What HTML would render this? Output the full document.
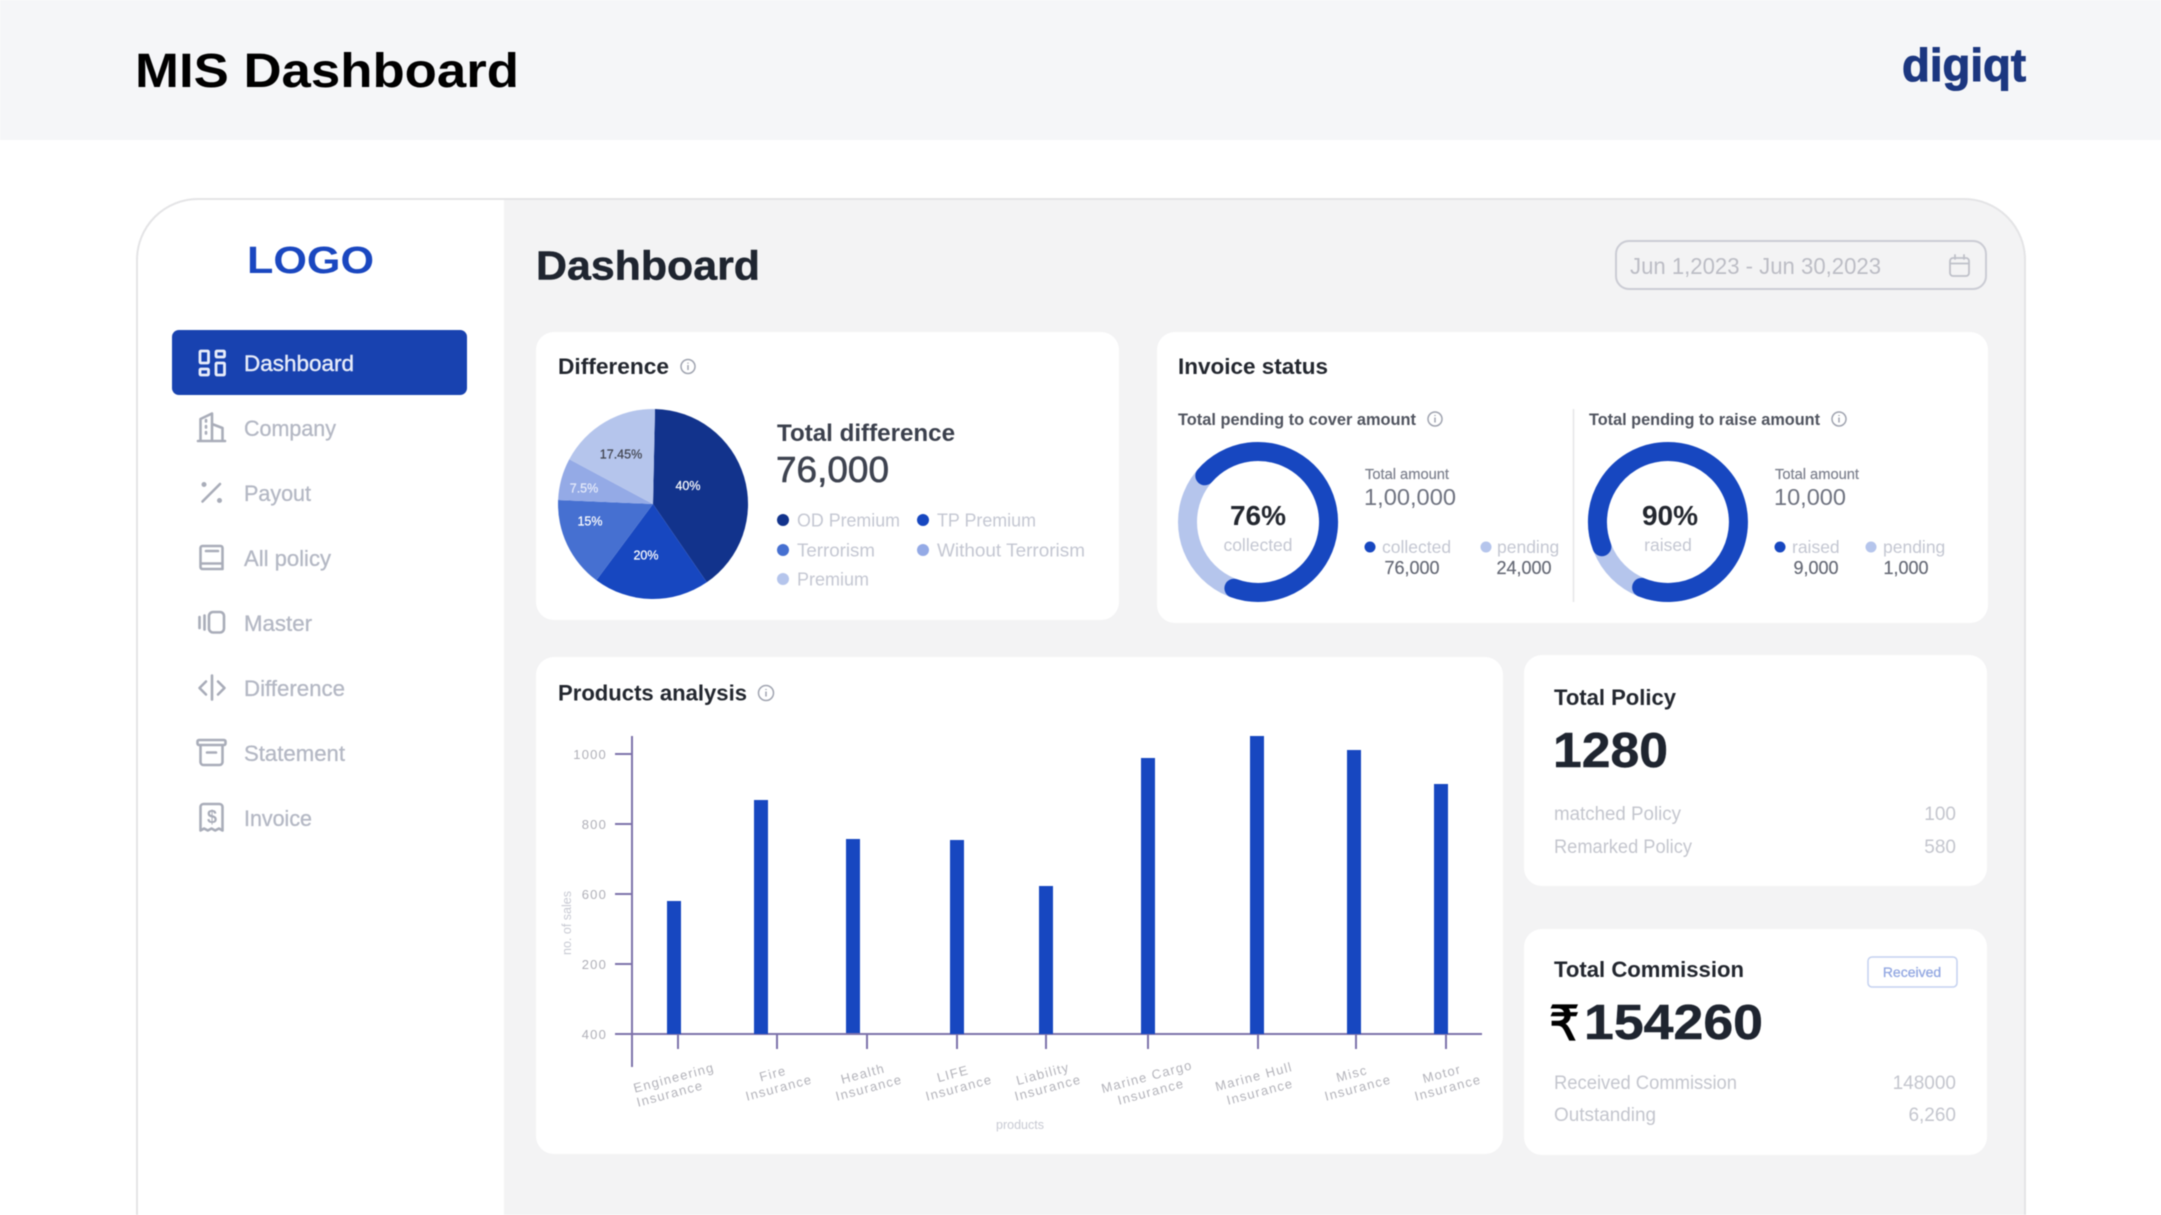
<!DOCTYPE html>
<html lang="en">
<head>
<meta charset="utf-8">
<title>MIS Dashboard</title>
<style>
html,body{margin:0;padding:0;background:#fff;width:2161px;height:1215px;overflow:hidden}
svg{display:block;filter:blur(.45px)}
text{font-family:"Liberation Sans","DejaVu Sans",sans-serif}
.b{font-weight:700}
.m{stroke:currentColor;stroke-width:.35px}
.nav{font-size:22px;fill:#b4b8c4;stroke:#b4b8c4;stroke-width:.3px}
.ic{fill:none;stroke:#a9adb9;stroke-width:2.6;stroke-linecap:round;stroke-linejoin:round}
.h{font-size:22px;font-weight:700;fill:#23272f}
.leg{font-size:18.5px;fill:#c4c7d2}
.pl{font-size:12.5px;fill:#fff;text-anchor:middle;stroke:currentColor;stroke-width:.2px}
.sh{font-size:16.5px;font-weight:700;fill:#50545f}
.ta{font-size:14.5px;fill:#7d818e;stroke:#7d818e;stroke-width:.2px}
.tv{font-size:23.5px;fill:#6f7380}
.sm{font-size:17.5px;fill:#c4c7d2}
.val{font-size:18px;fill:#666a76;text-anchor:middle;stroke:#666a76;stroke-width:.2px}
.row{font-size:19px;fill:#c4c6ce}
.ra{text-anchor:end}
.yt{font-size:13px;fill:#b0b0b8;text-anchor:end;letter-spacing:1.2px}
.xt{font-size:13px;fill:#b3b3ba;text-anchor:middle;letter-spacing:1.25px}
.ax{stroke:#7d72ab;stroke-width:2;fill:none}
.bar{fill:#1747c0}
.inf{fill:none;stroke:#a0a4b0;stroke-width:1.5}
.cap{font-size:12.5px;fill:#c8cad3}
</style>
</head>
<body>
<svg width="2161" height="1215" viewBox="0 0 2161 1215" xmlns="http://www.w3.org/2000/svg">

<!-- header -->
<rect width="2161" height="140" fill="#f5f6f8"/>
<text x="135" y="87" font-size="48" class="b" fill="#000" textLength="384" lengthAdjust="spacingAndGlyphs">MIS Dashboard</text>
<text x="1902" y="81" font-size="46" class="b" fill="#1c3780" stroke="#1c3780" stroke-width="1" textLength="124" lengthAdjust="spacingAndGlyphs">digiqt</text>

<!-- frame -->
<path d="M137 1215V260a61 61 0 0 1 61-61H1964a61 61 0 0 1 61 61V1215Z" fill="#fff"/>
<path d="M504 199H1964a61 61 0 0 1 61 61V1215H504Z" fill="#f3f3f4"/>
<path d="M137 1215V260a61 61 0 0 1 61-61H1964a61 61 0 0 1 61 61V1215" fill="none" stroke="#e4e4e6" stroke-width="2"/>

<!-- sidebar -->
<text x="247" y="273" font-size="38" class="b" fill="#1a47c0" textLength="127" lengthAdjust="spacingAndGlyphs">LOGO</text>
<rect x="172" y="330" width="295" height="65" rx="7" fill="#1842b0"/>
<g fill="none" stroke="#e8edfa" stroke-width="2.800">
<rect x="200" y="351" width="8.500" height="12" rx="1"/>
<rect x="216" y="351" width="8.500" height="6" rx="1"/>
<rect x="200" y="369" width="8.500" height="6" rx="1"/>
<rect x="216" y="363" width="8.500" height="12" rx="1"/>
</g>
<text x="244" y="371" font-size="22" fill="#e6ebf9" stroke="#e6ebf9" stroke-width=".4" textLength="110" lengthAdjust="spacingAndGlyphs">Dashboard</text>

<path class="ic" d="M198 441h27M200.500 441V419l11.500-5.500V441M212 424l10.500 4V441M206 420v1.500M206 426v1.500M206 432v1.500"/>
<text x="244" y="436" class="nav" textLength="92" lengthAdjust="spacingAndGlyphs">Company</text>

<path class="ic" d="M220 484L202.500 501.500"/>
<circle cx="204" cy="484.500" r="2.500" fill="#a9adb9"/><circle cx="219.500" cy="500.500" r="2.500" fill="#a9adb9"/>
<text x="244" y="501" class="nav" textLength="67" lengthAdjust="spacingAndGlyphs">Payout</text>

<path class="ic" d="M202.500 546h18a2 2 0 0 1 2 2v21h-20a2 2 0 0 1-2-2v-19a2 2 0 0 1 2-2zM200.500 563.500h22M206 551h12"/>
<text x="244" y="566" class="nav" textLength="87" lengthAdjust="spacingAndGlyphs">All policy</text>

<rect class="ic" x="209" y="612" width="15" height="20.500" rx="4"/>
<path class="ic" d="M199.500 617v11M204.500 615.500v14"/>
<text x="244" y="631" class="nav" textLength="68" lengthAdjust="spacingAndGlyphs">Master</text>

<path class="ic" d="M212 675.500v24M206 681.500l-6.500 6.500 6.500 6.500M218 681.500l6.500 6.500-6.500 6.500"/>
<text x="244" y="696" class="nav" textLength="101" lengthAdjust="spacingAndGlyphs">Difference</text>

<path class="ic" d="M199 740h25a1.500 1.500 0 0 1 1.500 1.500v2a1.500 1.500 0 0 1-1.500 1.500h-25a1.500 1.500 0 0 1-1.500-1.500v-2a1.500 1.500 0 0 1 1.500-1.500zM200.500 745v17a3 3 0 0 0 3 3h16a3 3 0 0 0 3-3v-17M207 752.500h9"/>
<text x="244" y="761" class="nav" textLength="101" lengthAdjust="spacingAndGlyphs">Statement</text>

<path class="ic" d="M200.500 830.500V807a3 3 0 0 1 3-3h16a3 3 0 0 1 3 3v23.500l-3.600-2-3.700 2-3.700-2-3.700 2-3.700-2z"/>
<text x="212" y="823" font-size="18" class="b" fill="#a9adb9" text-anchor="middle">$</text>
<text x="244" y="826" class="nav" textLength="68" lengthAdjust="spacingAndGlyphs">Invoice</text>

<!-- main header -->
<text x="536" y="279.500" font-size="40.500" class="b" fill="#1f2530" stroke="#1f2530" stroke-width=".5" textLength="224" lengthAdjust="spacingAndGlyphs">Dashboard</text>
<rect x="1616" y="241" width="370" height="48" rx="13" fill="#f3f3f4" stroke="#cbccd4" stroke-width="2"/>
<text x="1630" y="274" font-size="23" fill="#bcbdc5" textLength="251" lengthAdjust="spacingAndGlyphs">Jun 1,2023 - Jun 30,2023</text>
<g fill="none" stroke="#bfc1c9" stroke-width="1.800" stroke-linecap="round"><rect x="1950" y="258" width="19" height="18" rx="3"/><path d="M1950 263.500h19M1955 255v4M1964 255v4"/></g>

<!-- Difference card -->
<rect x="536" y="332" width="583" height="288" rx="18" fill="#fff"/>
<text x="558" y="374" class="h" textLength="111" lengthAdjust="spacingAndGlyphs">Difference</text>
<circle class="inf" cx="688" cy="366.500" r="7"/><path d="M688 365v5M688 362.600v1" stroke="#a0a4b0" stroke-width="1.500"/>
<path d="M653 504L655 409A95 95 0 0 1 706.800 582.300Z" fill="#12338c"/>
<path d="M653 504L706.800 582.300A95 95 0 0 1 596.400 580.300Z" fill="#1747c0"/>
<path d="M653 504L596.400 580.300A95 95 0 0 1 558.100 500Z" fill="#4670d1"/>
<path d="M653 504L558.100 500A95 95 0 0 1 569.300 459.200Z" fill="#94aae6"/>
<path d="M653 504L569.300 459.200A95 95 0 0 1 655 409Z" fill="#b5c5ec"/>
<text x="688" y="490" class="pl" style="color:#fff">40%</text>
<text x="646" y="559.500" class="pl" style="color:#fff">20%</text>
<text x="590" y="525.500" class="pl" style="color:#fff">15%</text>
<text x="584" y="492.500" class="pl" style="fill:#e6ebfa;color:#e6ebfa">7.5%</text>
<text x="621" y="458.500" class="pl" style="fill:#41444f;color:#41444f">17.45%</text>
<text x="777" y="441" font-size="24" class="b" fill="#3b404d" textLength="178" lengthAdjust="spacingAndGlyphs">Total difference</text>
<text x="776" y="482" font-size="36" fill="#3e4350" stroke="#3e4350" stroke-width=".6" textLength="113" lengthAdjust="spacingAndGlyphs">76,000</text>
<circle cx="783" cy="520" r="6" fill="#12338c"/><text x="797" y="526.500" class="leg" textLength="103" lengthAdjust="spacingAndGlyphs">OD Premium</text>
<circle cx="923" cy="520" r="6" fill="#1747c0"/><text x="937" y="526.500" class="leg" textLength="99" lengthAdjust="spacingAndGlyphs">TP Premium</text>
<circle cx="783" cy="550" r="6" fill="#4670d1"/><text x="797" y="556.500" class="leg" textLength="78" lengthAdjust="spacingAndGlyphs">Terrorism</text>
<circle cx="923" cy="550" r="6" fill="#94aae6"/><text x="937" y="556.500" class="leg" textLength="148" lengthAdjust="spacingAndGlyphs">Without Terrorism</text>
<circle cx="783" cy="579" r="6" fill="#b5c5ec"/><text x="797" y="585.500" class="leg" textLength="72" lengthAdjust="spacingAndGlyphs">Premium</text>

<!-- Invoice card -->
<rect x="1157" y="332" width="831" height="291" rx="18" fill="#fff"/>
<text x="1178" y="374" class="h" textLength="150" lengthAdjust="spacingAndGlyphs">Invoice status</text>
<text x="1178" y="425" class="sh" textLength="238" lengthAdjust="spacingAndGlyphs">Total pending to cover amount</text>
<circle class="inf" cx="1435" cy="419" r="7"/><path d="M1435 417.500v5M1435 415v1" stroke="#a0a4b0" stroke-width="1.500"/>
<text x="1589" y="425" class="sh" textLength="231" lengthAdjust="spacingAndGlyphs">Total pending to raise amount</text>
<circle class="inf" cx="1839" cy="419" r="7"/><path d="M1839 417.500v5M1839 415v1" stroke="#a0a4b0" stroke-width="1.500"/>
<path d="M1573.500 409V602" stroke="#e6e6e8" stroke-width="1.500"/>

<circle cx="1258" cy="522" r="70.500" fill="none" stroke="#b5c5ec" stroke-width="19"/>
<path d="M1204.800 475.800A70.500 70.500 0 1 1 1233.900 588.200" fill="none" stroke="#1747c0" stroke-width="19" stroke-linecap="round"/>
<text x="1258" y="525" font-size="28" class="b" fill="#23272f" text-anchor="middle">76%</text>
<text x="1258" y="551" class="sm" text-anchor="middle">collected</text>
<text x="1365" y="479" class="ta" textLength="84" lengthAdjust="spacingAndGlyphs">Total amount</text>
<text x="1364" y="505" class="tv" textLength="92" lengthAdjust="spacingAndGlyphs">1,00,000</text>
<circle cx="1370" cy="547" r="5.500" fill="#1747c0"/><text x="1382" y="553" class="sm">collected</text>
<text x="1412" y="574" class="val">76,000</text>
<circle cx="1486" cy="547" r="5.500" fill="#b5c5ec"/><text x="1497" y="553" class="sm">pending</text>
<text x="1524" y="574" class="val">24,000</text>

<circle cx="1668" cy="522" r="70.500" fill="none" stroke="#b5c5ec" stroke-width="19"/>
<path d="M1601.900 546.700A70.500 70.500 0 1 1 1641.600 587.400" fill="none" stroke="#1747c0" stroke-width="19" stroke-linecap="round"/>
<text x="1670" y="525" font-size="28" class="b" fill="#23272f" text-anchor="middle">90%</text>
<text x="1668" y="551" class="sm" text-anchor="middle">raised</text>
<text x="1775" y="479" class="ta" textLength="84" lengthAdjust="spacingAndGlyphs">Total amount</text>
<text x="1774" y="505" class="tv" textLength="72" lengthAdjust="spacingAndGlyphs">10,000</text>
<circle cx="1780" cy="547" r="5.500" fill="#1747c0"/><text x="1792" y="553" class="sm">raised</text>
<text x="1816" y="574" class="val">9,000</text>
<circle cx="1871" cy="547" r="5.500" fill="#b5c5ec"/><text x="1883" y="553" class="sm">pending</text>
<text x="1906" y="574" class="val">1,000</text>

<!-- Products card -->
<rect x="536" y="657" width="967" height="497" rx="18" fill="#fff"/>
<text x="558" y="700.500" class="h" textLength="189" lengthAdjust="spacingAndGlyphs">Products analysis</text>
<circle class="inf" cx="766" cy="693" r="7.500"/><path d="M766 691.500v5M766 689v1" stroke="#a0a4b0" stroke-width="1.500"/>

<path class="ax" d="M632 736V1067M615 754h17M615 824h17M615 894h17M615 964h17M615 1034H1482"/>
<path class="ax" d="M678 1034v15M777 1034v15M867 1034v15M957 1034v15M1046 1034v15M1148 1034v15M1258 1034v15M1356 1034v15M1446 1034v15"/>
<rect class="bar" x="667" y="901" width="14" height="133"/>
<rect class="bar" x="754" y="800" width="14" height="234"/>
<rect class="bar" x="846" y="839" width="14" height="194"/>
<rect class="bar" x="950" y="840" width="14" height="194"/>
<rect class="bar" x="1039" y="886" width="14" height="148"/>
<rect class="bar" x="1141" y="758" width="14" height="276"/>
<rect class="bar" x="1250" y="736" width="14" height="298"/>
<rect class="bar" x="1347" y="750" width="14" height="284"/>
<rect class="bar" x="1434" y="784" width="14" height="250"/>

<text x="607" y="759" class="yt">1000</text>
<text x="607" y="829" class="yt">800</text>
<text x="607" y="899" class="yt">600</text>
<text x="607" y="969" class="yt">200</text>
<text x="607" y="1039" class="yt">400</text>

<g>
<text class="xt" transform="translate(675 1082) rotate(-15)">Engineering</text><text class="xt" transform="translate(671 1098) rotate(-15)">Insurance</text>
<text class="xt" transform="translate(774 1078) rotate(-15)">Fire</text><text class="xt" transform="translate(780 1092) rotate(-15)">Insurance</text>
<text class="xt" transform="translate(864 1078) rotate(-15)">Health</text><text class="xt" transform="translate(870 1092) rotate(-15)">Insurance</text>
<text class="xt" transform="translate(954 1078) rotate(-15)">LIFE</text><text class="xt" transform="translate(960 1092) rotate(-15)">Insurance</text>
<text class="xt" transform="translate(1044 1078) rotate(-15)">Liability</text><text class="xt" transform="translate(1049 1092) rotate(-15)">Insurance</text>
<text class="xt" transform="translate(1148 1081) rotate(-15)">Marine Cargo</text><text class="xt" transform="translate(1152 1096) rotate(-15)">Insurance</text>
<text class="xt" transform="translate(1255 1081) rotate(-15)">Marine Hull</text><text class="xt" transform="translate(1261 1096) rotate(-15)">Insurance</text>
<text class="xt" transform="translate(1353 1078) rotate(-15)">Misc</text><text class="xt" transform="translate(1359 1092) rotate(-15)">Insurance</text>
<text class="xt" transform="translate(1443 1078) rotate(-15)">Motor</text><text class="xt" transform="translate(1449 1092) rotate(-15)">Insurance</text>
</g>
<text x="1020" y="1129" class="cap" text-anchor="middle">products</text>
<text class="cap" text-anchor="middle" transform="translate(571 923) rotate(-90)">no. of sales</text>

<!-- Total Policy -->
<rect x="1524" y="655" width="463" height="231" rx="18" fill="#fff"/>
<text x="1554" y="705" font-size="22" class="b" fill="#23272f" textLength="122" lengthAdjust="spacingAndGlyphs">Total Policy</text>
<text x="1553" y="767" font-size="49" class="b" fill="#1f2530" stroke="#1f2530" stroke-width=".5" textLength="115" lengthAdjust="spacingAndGlyphs">1280</text>
<text x="1554" y="820" class="row" textLength="127" lengthAdjust="spacingAndGlyphs">matched Policy</text>
<text x="1956" y="820" class="row ra">100</text>
<text x="1554" y="853" class="row" textLength="138" lengthAdjust="spacingAndGlyphs">Remarked Policy</text>
<text x="1956" y="853" class="row ra">580</text>

<!-- Total Commission -->
<rect x="1524" y="929" width="463" height="226" rx="18" fill="#fff"/>
<text x="1554" y="977" font-size="22" class="b" fill="#23272f" textLength="190" lengthAdjust="spacingAndGlyphs">Total Commission</text>
<rect x="1868" y="957" width="89" height="30" rx="4" fill="#fff" stroke="#c5d2f0" stroke-width="1.500"/>
<text x="1912" y="977" font-size="14" text-anchor="middle" fill="#93a8e2" stroke="#93a8e2" stroke-width=".3">Received</text>
<text x="1549" y="1040" font-size="48" fill="#000" stroke="#000" stroke-width="1.200" style='font-family:"DejaVu Sans",sans-serif'>₹</text>
<text x="1584" y="1039" font-size="49" class="b" fill="#1f2530" stroke="#1f2530" stroke-width=".5" textLength="179" lengthAdjust="spacingAndGlyphs">154260</text>
<text x="1554" y="1089" class="row" textLength="183" lengthAdjust="spacingAndGlyphs">Received Commission</text>
<text x="1956" y="1089" class="row ra">148000</text>
<text x="1554" y="1121" class="row" textLength="102" lengthAdjust="spacingAndGlyphs">Outstanding</text>
<text x="1956" y="1121" class="row ra">6,260</text>
</svg>
</body>
</html>
